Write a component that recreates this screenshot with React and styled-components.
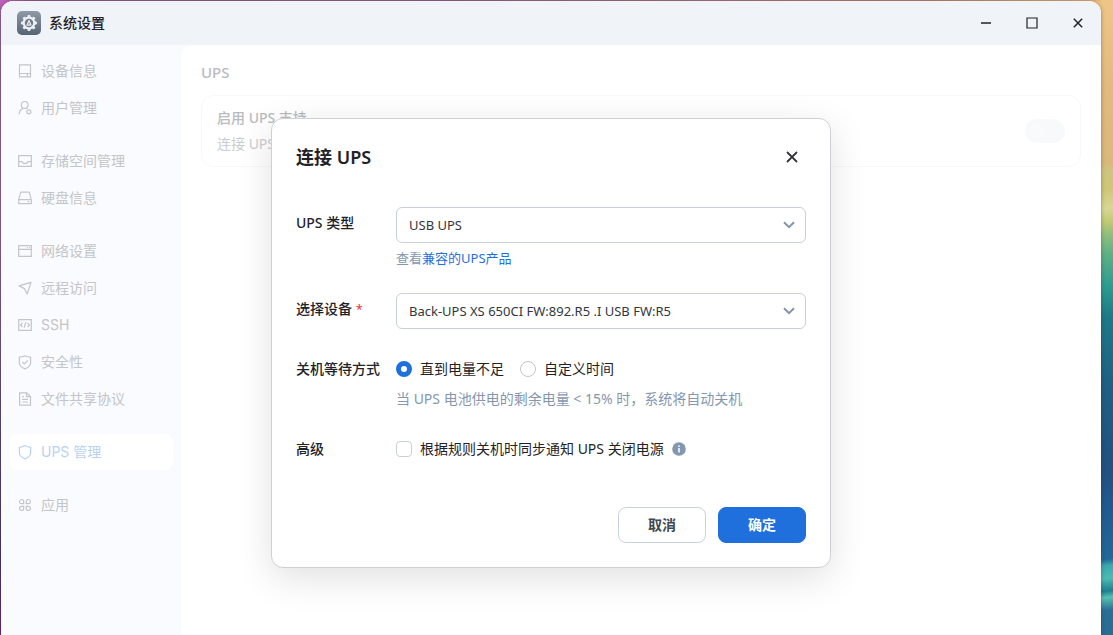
import React, { useState } from "react";
import styled, { createGlobalStyle, css } from "styled-components";

const GlobalStyle = createGlobalStyle`
  *, *::before, *::after { box-sizing: border-box; }
  body {
    margin: 0;
    font-family: "Noto Sans", "Noto Sans CJK SC", sans-serif;
    font-size: 14px;
    line-height: 20px;
    color: #1f2329;
  }
  button, select, input { font: inherit; color: inherit; }
`;

/* ---------- desktop and window ---------- */

const Desktop = styled.div`
  height: 100vh;
  overflow: hidden;
  padding: 1px 12px 0 1px;
  background:
    linear-gradient(90deg, #c45fc0 0, #935c8f 3%, #96608c 40%, #b98a72 85%, #e6b47c 100%) top left / calc(100% - 12px) 1px no-repeat,
    linear-gradient(180deg, #c45fc0 0, #93649a 3%, #8a5f98 40%, #5a4a80 65%, #45367a 88%, #6a2878 100%) top left / 14px 100% no-repeat,
    linear-gradient(174deg, #f0c688 0, #e2ba80 14%, #dab87c 26%, #cfc47f 27%, #cfc777 30%, #d9d795 33%, #c3cb74 35%, #93bf7c 37%, #62b184 40%, #2f9d90 45%, #1d7a87 50%, #1f6183 60%, #235080 74%, #215a90 80%, #226898 88%, #3aa8ad 89%, #4cbcb4 91%, #1f7f90 93%, #58c0b4 94%, #2a6f96 96%, #2b6c94 100%) top right / 28px 100% no-repeat,
    #23507f;
`;

const Window = styled.section`
  display: flex;
  flex-direction: column;
  height: calc(100vh + 8px);
  border-radius: 12px;
  overflow: hidden;
  background: #fff;
  box-shadow: 0 0 4px rgba(40, 30, 20, 0.4);
`;

const TitleBar = styled.header`
  display: flex;
  align-items: center;
  flex: none;
  height: 44px;
  padding-left: 16px;
  background: #f0f3f8;
`;

const AppTitle = styled.h1`
  flex: 1;
  margin: 0 0 0 8px;
  font-size: 14px;
  font-weight: 500;
`;

const WindowButton = styled.button`
  display: grid;
  place-items: center;
  width: 46px;
  height: 44px;
  padding: 0;
  border: 0;
  background: none;
  color: #1f2329;
`;

const Body = styled.div`
  position: relative;
  display: flex;
  flex: 1;
  background: #fafbfe;
`;

/* ---------- sidebar ---------- */

const Sidebar = styled.nav`
  display: flex;
  flex-direction: column;
  flex: none;
  gap: 17px;
  width: 180px;
  padding: 8px;
  font-family: Inter, "Noto Sans CJK SC", sans-serif;
`;

const NavGroup = styled.div`
  display: flex;
  flex-direction: column;
  gap: 1px;
`;

const NavItem = styled.a`
  display: flex;
  align-items: center;
  gap: 8px;
  height: 36px;
  padding: 0 8px;
  border-radius: 8px;
  text-decoration: none;
  color: ${(p) => (p.$active ? "#b9d2f4" : "#c3c5c8")};
  background: ${(p) => (p.$active ? "#fff" : "none")};
`;

/* ---------- page content ---------- */

const Content = styled.main`
  flex: 1;
  min-width: 0;
  padding: 17px 20px;
  border-top-left-radius: 12px;
  background: #fff;
`;

const PageTitle = styled.h2`
  margin: 0 0 13px;
  font-size: 15px;
  font-weight: 500;
  color: #b9bbbf;
`;

const Card = styled.div`
  display: flex;
  align-items: center;
  justify-content: space-between;
  height: 72px;
  padding: 0 15px;
  border: 1px solid #f7f8f9;
  border-radius: 12px;
`;

const CardText = styled.div`
  display: flex;
  flex-direction: column;
  gap: 6px;
`;

const CardLabel = styled.label`
  font-weight: 500;
  color: #b9bbbf;
`;

const CardNote = styled.span`
  color: #cbcdd1;
`;

const Switch = styled.input`
  appearance: none;
  width: 40px;
  height: 24px;
  margin: 0;
  border-radius: 12px;
  background: radial-gradient(circle at 12px 12px, #f9fafc 8px, #f7f9fb 9px);
`;

/* ---------- dialog ---------- */

const Overlay = styled.div`
  position: absolute;
  inset: 0;
  display: flex;
  justify-content: center;
  align-items: flex-start;
  padding-top: 73px;
`;

const Dialog = styled.form`
  width: 560px;
  max-width: 100%;
  padding: 24px;
  border: 1px solid #cdd0d4;
  border-radius: 12px;
  background: #fff;
  box-shadow: 0 10px 36px rgba(0, 0, 0, 0.12);
`;

const DialogHeader = styled.header`
  display: flex;
  align-items: center;
  justify-content: space-between;
  margin-bottom: 36px;
`;

const DialogTitle = styled.h2`
  margin: 0;
  font-size: 18px;
  line-height: 28px;
  font-weight: 600;
`;

const CloseButton = styled.button`
  display: grid;
  place-items: center;
  width: 28px;
  height: 28px;
  padding: 0;
  border: 0;
  background: none;
  color: #33373d;
`;

const Fields = styled.div`
  display: flex;
  flex-direction: column;
  gap: 24px;
`;

const Field = styled.div`
  display: grid;
  grid-template-columns: 100px 1fr;
`;

const labelStyle = css`
  line-height: 32px;
  font-weight: 500;
`;

const FieldLabel = styled.label`${labelStyle}`;
const GroupLabel = styled.span`${labelStyle}`;

const Required = styled.span`
  margin-left: 4px;
  font-size: 12px;
  color: #f0384b;
`;

const SelectBox = styled.div`
  display: grid;
  align-items: center;

  & > * { grid-area: 1 / 1; }
  & > svg {
    justify-self: end;
    margin-right: 11px;
    color: #8593ab;
    pointer-events: none;
  }
`;

const Select = styled.select`
  appearance: none;
  width: 100%;
  height: 36px;
  padding: 0 36px 0 12px;
  border: 1px solid #c9d0d9;
  border-radius: 6px;
  background: #fff;
  font-size: 13px;
  color: #33373d;
`;

const Hint = styled.p`
  margin: 4px 0 0;
  font-size: ${(p) => (p.$small ? "13px" : "14px")};
  line-height: ${(p) => (p.$small ? "22px" : "20px")};
  color: #8497b0;
`;

const HintLink = styled.a`
  color: #1f70dd;
  text-decoration: none;
`;

const Options = styled.div`
  display: flex;
  align-items: center;
  gap: 16px;
  height: 32px;
`;

const Option = styled.label`
  display: flex;
  align-items: center;
  gap: 8px;
`;

const Radio = styled.input`
  appearance: none;
  width: 16px;
  height: 16px;
  margin: 0;
  border: 1px solid #bfc6cf;
  border-radius: 50%;
  background: #fff;

  &:checked { border: 5px solid #1f70dd; }
`;

const Checkbox = styled.input`
  appearance: none;
  width: 16px;
  height: 16px;
  margin: 0;
  border: 1px solid #c9d0d9;
  border-radius: 4px;
  background: #fff;

  &:checked { background: #1f70dd; border-color: #1f70dd; }
`;

const Footer = styled.footer`
  display: flex;
  justify-content: flex-end;
  gap: 12px;
  margin-top: 42px;
`;

const Button = styled.button`
  width: 88px;
  height: 36px;
  padding: 0;
  border: 1px solid ${(p) => (p.$primary ? "#1f70dd" : "#c9d3df")};
  border-radius: 8px;
  background: ${(p) => (p.$primary ? "#1f70dd" : "#fff")};
  color: ${(p) => (p.$primary ? "#fff" : "#3f4854")};
  font-weight: 600;
`;

/* ---------- icons ---------- */

const Icon = ({ children, size = 16 }) => (
  <svg width={size} height={size} viewBox="0 0 16 16" fill="none" stroke="currentColor" strokeWidth="1.2" aria-hidden="true">
    {children}
  </svg>
);

const icons = {
  device: <Icon><path d="M2.500 1.900h11v12h-11zM2.500 10.500h11M10.300 10.500v3.400" /></Icon>,
  user: (
    <Icon>
      <circle cx="7.700" cy="4.900" r="3.400" />
      <path d="M2.200 14.300c0-3 1.500-5.200 4.200-6M9.300 7.800l.9 1" />
      <circle cx="11.900" cy="11.800" r="2" />
    </Icon>
  ),
  storage: <Icon><path d="M1.700 2.600h12.600v10.800H1.700zM1.700 8.600h3.400l1.200 1.800h3.400l1.200-1.800h3.400" /></Icon>,
  disk: <Icon><path d="M3.800 2.200h8.400l2.100 7.200v4.300H1.700V9.400zM1.700 9.600h12.600M10.600 11.700h1.600" strokeLinejoin="round" /></Icon>,
  network: <Icon><path d="M1.700 2.600h12.600v10.800H1.700zM1.700 6.400h12.600M9.800 4.500h1M11.900 4.500h1" /></Icon>,
  remote: <Icon><path d="M14 2.400 10.200 14 7.400 8.600 2 5.900z" strokeLinejoin="round" /></Icon>,
  ssh: <Icon><path d="M1.700 2.600h12.600v10.800H1.700zM5.400 6 3.500 8l1.900 2M10.600 6l1.900 2-1.900 2M8.900 5.300 7.100 10.700" /></Icon>,
  security: <Icon><path d="M2.400 3.200C4.600 3.100 6.500 2.600 8 1.700 9.500 2.600 11.400 3.100 13.600 3.200V9c0 2.600-2.300 4.500-5.600 5.900C4.700 13.500 2.400 11.600 2.400 9zM5.300 8l2 2 3.500-3.700" /></Icon>,
  file: <Icon><path d="M2.600 1.900h7.200l3.700 3.600v8.600H2.600zM9.500 2v3.700h3.900M5.200 5.600h1.800M5.200 8.400h5.700M5.200 11h5.700" /></Icon>,
  ups: <Icon><path d="M2.400 3.300C4.600 3.200 6.500 2.500 8 1.600 9.500 2.500 11.400 3.200 13.600 3.300V9c0 2.600-2.300 4.500-5.600 5.900C4.700 13.500 2.400 11.600 2.400 9z" /></Icon>,
  apps: (
    <Icon>
      <path d="M6.700 6.700H4.400a2.100 2.100 0 1 1 2.300-2.100zM9.300 6.700h2.300a2.100 2.100 0 1 0-2.300-2.100zM6.700 9.300H4.400a2.100 2.100 0 1 0 2.300 2.100zM9.300 9.300h2.300a2.100 2.100 0 1 1-2.300 2.100z" />
    </Icon>
  ),
};

const SettingsLogo = () => (
  <svg width="24" height="24" viewBox="0 0 24 24" aria-hidden="true">
    <defs>
      <linearGradient id="logoFill" x1="0" y1="0" x2="0" y2="1">
        <stop offset="0" stopColor="#909ba8" />
        <stop offset="1" stopColor="#566373" />
      </linearGradient>
    </defs>
    <rect width="24" height="24" rx="5" fill="url(#logoFill)" />
    <g fill="#eef1f4">
      {[0, 45, 90, 135, 180, 225, 270, 315].map((a) => (
        <rect key={a} x="10.500" y="4" width="3" height="3.600" rx="1" transform={`rotate(${a} 12 12)`} />
      ))}
    </g>
    <circle cx="12" cy="12" r="5.300" fill="#6f7b89" stroke="#eef1f4" strokeWidth="2.200" />
    <path d="M12 9.200 9.800 14.200h4.400z" fill="#aab3bd" stroke="#eef1f4" strokeWidth="1" strokeLinejoin="round" />
  </svg>
);

const CrossIcon = ({ size, width }) => (
  <svg width={size} height={size} viewBox="0 0 12 12" stroke="currentColor" strokeWidth={width} aria-hidden="true">
    <path d="M1 1l10 10M11 1 1 11" />
  </svg>
);

const Chevron = () => (
  <svg width="12" height="8" viewBox="0 0 12 8" fill="none" stroke="currentColor" strokeWidth="2" aria-hidden="true">
    <path d="M1 1.200 6 6.200l5-5" />
  </svg>
);

const InfoIcon = () => (
  <svg width="14" height="14" viewBox="0 0 14 14" role="img" aria-label="说明">
    <circle cx="7" cy="7" r="6.800" fill="#8497b0" />
    <path d="M7 6v4.500M7 3.400v1.500" stroke="#fff" strokeWidth="1.500" />
  </svg>
);

/* ---------- page ---------- */

const navGroups = [
  [["device", "设备信息"], ["user", "用户管理"]],
  [["storage", "存储空间管理"], ["disk", "硬盘信息"]],
  [["network", "网络设置"], ["remote", "远程访问"], ["ssh", "SSH"], ["security", "安全性"], ["file", "文件共享协议"]],
  [["ups", "UPS 管理"]],
  [["apps", "应用"]],
];

export default function App() {
  const [mode, setMode] = useState("low");

  return (
    <>
      <GlobalStyle />
      <Desktop>
        <Window>
          <TitleBar>
            <SettingsLogo />
            <AppTitle>系统设置</AppTitle>
            <WindowButton aria-label="最小化">
              <svg width="10" height="10" viewBox="0 0 10 10" stroke="currentColor" strokeWidth="1.500"><path d="M0 5h10" /></svg>
            </WindowButton>
            <WindowButton aria-label="最大化">
              <svg width="12" height="12" viewBox="0 0 12 12" fill="none" stroke="currentColor" strokeWidth="1.200"><path d="M1 1h10v10H1z" /></svg>
            </WindowButton>
            <WindowButton aria-label="关闭窗口"><CrossIcon size={10} width={1.8} /></WindowButton>
          </TitleBar>

          <Body>
            <Sidebar>
              {navGroups.map((group, i) => (
                <NavGroup key={i}>
                  {group.map(([icon, name]) => (
                    <NavItem key={icon} href={`#${icon}`} $active={icon === "ups"}>
                      {icons[icon]}
                      {name}
                    </NavItem>
                  ))}
                </NavGroup>
              ))}
            </Sidebar>

            <Content>
              <PageTitle>UPS</PageTitle>
              <Card>
                <CardText>
                  <CardLabel htmlFor="ups-enabled">启用 UPS 支持</CardLabel>
                  <CardNote>连接 UPS</CardNote>
                </CardText>
                <Switch id="ups-enabled" type="checkbox" role="switch" />
              </Card>
            </Content>

            <Overlay>
              <Dialog role="dialog" aria-labelledby="dialog-title" onSubmit={(e) => e.preventDefault()}>
                <DialogHeader>
                  <DialogTitle id="dialog-title">连接 UPS</DialogTitle>
                  <CloseButton type="button" aria-label="关闭"><CrossIcon size={12} width={1.8} /></CloseButton>
                </DialogHeader>

                <Fields>
                  <Field>
                    <FieldLabel htmlFor="ups-type">UPS 类型</FieldLabel>
                    <div>
                      <SelectBox>
                        <Select id="ups-type"><option>USB UPS</option></Select>
                        <Chevron />
                      </SelectBox>
                      <Hint $small>查看<HintLink href="#compatible">兼容的UPS产品</HintLink></Hint>
                    </div>
                  </Field>

                  <Field>
                    <FieldLabel htmlFor="ups-device">选择设备<Required>*</Required></FieldLabel>
                    <SelectBox>
                      <Select id="ups-device"><option>Back-UPS XS 650CI FW:892.R5 .I USB FW:R5</option></Select>
                      <Chevron />
                    </SelectBox>
                  </Field>

                  <Field role="radiogroup" aria-labelledby="wait-label">
                    <GroupLabel id="wait-label">关机等待方式</GroupLabel>
                    <div>
                      <Options>
                        <Option>
                          <Radio type="radio" name="wait" checked={mode === "low"} onChange={() => setMode("low")} />
                          直到电量不足
                        </Option>
                        <Option>
                          <Radio type="radio" name="wait" checked={mode === "custom"} onChange={() => setMode("custom")} />
                          自定义时间
                        </Option>
                      </Options>
                      <Hint>当 UPS 电池供电的剩余电量 &lt; 15% 时，系统将自动关机</Hint>
                    </div>
                  </Field>

                  <Field role="group" aria-labelledby="advanced-label">
                    <GroupLabel id="advanced-label">高级</GroupLabel>
                    <Options>
                      <Option>
                        <Checkbox type="checkbox" />
                        根据规则关机时同步通知 UPS 关闭电源
                        <InfoIcon />
                      </Option>
                    </Options>
                  </Field>
                </Fields>

                <Footer>
                  <Button type="button">取消</Button>
                  <Button type="submit" $primary>确定</Button>
                </Footer>
              </Dialog>
            </Overlay>
          </Body>
        </Window>
      </Desktop>
    </>
  );
}
